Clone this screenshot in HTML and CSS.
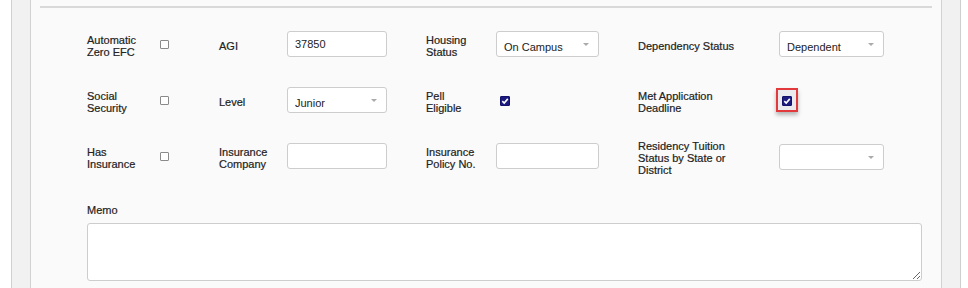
FILE: index.html
```html
<!DOCTYPE html>
<html lang="en">
<head>
    <meta charset="UTF-8">
    <meta name="viewport" content="width=device-width, initial-scale=1.0">
    <title>Student Aid Details</title>
    <link rel="stylesheet" href="styles.css">
</head>
<body>
    <div class="frame">
        <div class="panel">
            <div class="rule"></div>
            <div class="form">
                <div class="fields">
                    <!-- row 1 -->
                    <label class="label">Automatic Zero EFC</label>
                    <span class="check"></span>
                    <label class="label">AGI</label>
                    <div class="field w100">37850</div>
                    <label class="label">Housing Status</label>
                    <div class="field select w103"><span>On Campus</span><i class="caret"></i></div>
                    <label class="label wide">Dependency Status</label>
                    <div class="field select w105"><span>Dependent</span><i class="caret"></i></div>

                    <!-- row 2 -->
                    <label class="label">Social Security</label>
                    <span class="check"></span>
                    <label class="label">Level</label>
                    <div class="field select w100"><span>Junior</span><i class="caret"></i></div>
                    <label class="label">Pell Eligible</label>
                    <span class="check checked indent">
                        <svg viewBox="0 0 10 10" width="10" height="10"><path d="M2.3 5.2 L4.2 7 L7.8 2.9" fill="none" stroke="#fff" stroke-width="1.6"/></svg>
                    </span>
                    <label class="label wide">Met Application Deadline</label>
                    <span class="highlight">
                        <span class="check checked">
                            <svg viewBox="0 0 10 10" width="10" height="10"><path d="M2.3 5.2 L4.2 7 L7.8 2.9" fill="none" stroke="#fff" stroke-width="1.6"/></svg>
                        </span>
                    </span>

                    <!-- row 3 -->
                    <label class="label">Has Insurance</label>
                    <span class="check"></span>
                    <label class="label">Insurance Company</label>
                    <div class="field w100"></div>
                    <label class="label">Insurance Policy No.</label>
                    <div class="field w103"></div>
                    <label class="label wide">Residency Tuition Status by State or District</label>
                    <div class="field select w105 low"><span></span><i class="caret"></i></div>
                </div>

                <label class="label memo-label">Memo</label>
                <textarea class="memo"></textarea>
            </div>
        </div>
    </div>
</body>
</html>
```

FILE: styles.css
```css
body {
    margin: 0;
    background: #fff;
    font-family: "Liberation Sans", Arial, sans-serif;
    color: #222;
}
.frame {
    margin: 0 7px 0 11px;
    padding: 0 18px;
    border-left: 1px solid #cfcfcf;
    border-right: 1px solid #cfcfcf;
    background: #f1f1f1;
}
.panel {
    padding: 6px 9px 20px;
    border-left: 1px solid #d2d2d2;
    border-right: 1px solid #d2d2d2;
    background: #fafafa;
}
.rule {
    height: 2px;
    background: #d9d9d9;
}
.form {
    padding: 18px 10px 0 47px;
}
.fields {
    display: grid;
    grid-template-columns: 73px 59px 68px 139px 70px 142px 141px 1fr;
    grid-auto-rows: 36px;
    row-gap: 20px;
    align-items: center;
}
.label {
    display: block;
    max-width: 56px;
    font-size: 11px;
    line-height: 12px;
    color: #222;
    -webkit-text-stroke: 0.2px #222;
}
.fields .label {
    margin-top: 4px;
}
.label.wide {
    max-width: 110px;
}
.field {
    box-sizing: border-box;
    height: 26px;
    padding: 0 7px;
    border: 1px solid #cdcdcd;
    border-radius: 3px;
    background: #fff;
    font-size: 11px;
    line-height: 24px;
    color: #222;
}
.select {
    display: flex;
    align-items: center;
    justify-content: space-between;
    padding-top: 5px;
}
.select.low {
    margin-top: 2px;
}
.caret {
    width: 0;
    height: 0;
    margin: -4px 2px 0 0;
    border-left: 3px solid transparent;
    border-right: 3px solid transparent;
    border-top: 3px solid #aaa;
}
.w100 { width: 100px; }
.w103 { width: 103px; }
.w105 { width: 105px; }
.check {
    box-sizing: border-box;
    display: flex;
    align-items: center;
    justify-content: center;
    width: 9px;
    height: 9px;
    margin-top: 1px;
    border: 1px solid #8a8a8a;
    border-radius: 1px;
    background: #fff;
}
.check.checked {
    width: 10px;
    height: 10px;
    border-color: #13106a;
    background: #1c1a7e;
}
.check.indent {
    margin-left: 4px;
}
.check svg {
    display: block;
    flex: none;
}
.highlight {
    display: flex;
    align-items: center;
    justify-content: center;
    width: 22px;
    height: 24px;
    box-sizing: border-box;
    margin-left: -3px;
    border: 2px solid #e2393d;
    background: #e9e9ee;
    box-shadow: 0 3px 4px rgba(0, 0, 0, 0.28);
}
.memo-label {
    margin-top: 30px;
}
.memo {
    display: block;
    box-sizing: border-box;
    width: 100%;
    height: 58px;
    margin: 7px 0 0;
    border: 1px solid #cdcdcd;
    border-radius: 3px;
    background: #fff;
}
```
